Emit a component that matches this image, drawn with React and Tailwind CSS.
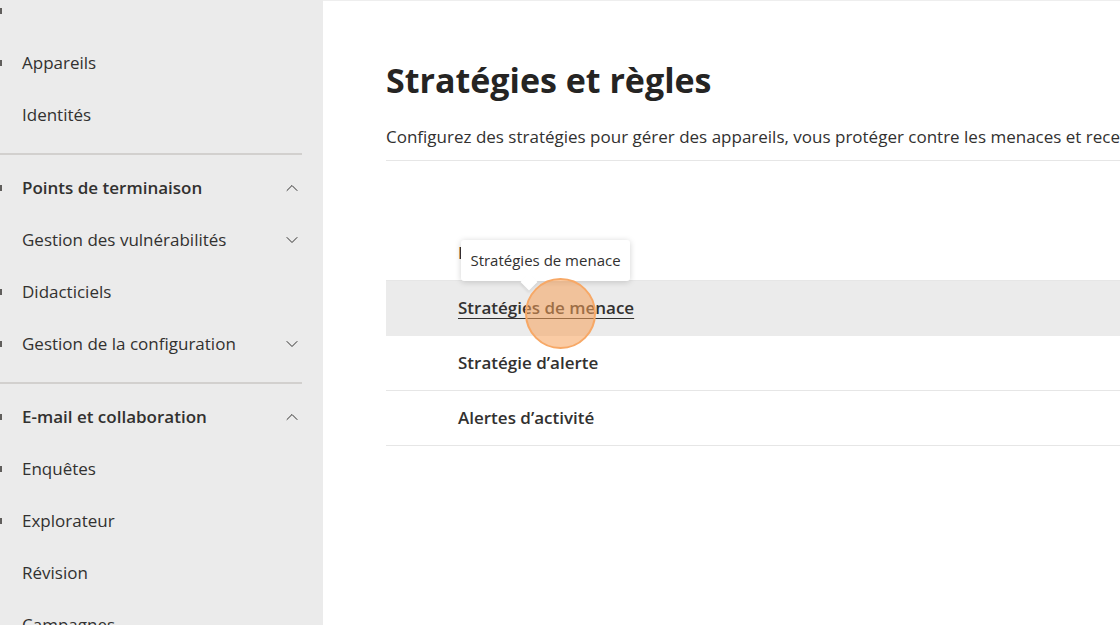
import React from 'react'
import { ChevronDown, ChevronUp } from 'lucide-react'

const font = { fontFamily: '"Open Sans", "Noto Sans", sans-serif' }

const NavItem = ({ label, bold, chevron, mark }) => (
  <div className='relative h-[52px] flex items-center justify-between pl-[22px] pr-[21px]'>
    {mark && <span className='absolute left-0 top-1/2 -translate-y-1/2 w-[2px] h-[6px] bg-[#605e5c]' />}
    <span className={`text-[17px] text-[#323130] ${bold ? 'font-semibold' : ''}`}>{label}</span>
    {chevron === 'up' && <ChevronUp size={20} strokeWidth={1.2} className='text-[#323130]' />}
    {chevron === 'down' && <ChevronDown size={20} strokeWidth={1.2} className='text-[#323130]' />}
  </div>
)

const Divider = () => (
  <div className='h-[21px] pt-[12px] pr-[21px]'>
    <div className='h-[2px] bg-[#d2d0ce]' />
  </div>
)

const Row = ({ label, active }) => (
  <div className={`h-[55px] flex items-center pl-[72px] border-b border-[#e6e6e6] ${active ? 'bg-[#ebebeb] border-transparent' : ''}`}>
    <span className={`text-[17px] font-semibold text-[#323130] ${active ? 'underline underline-offset-4' : ''}`}>{label}</span>
  </div>
)

export default function App() {
  return (
    <div className='relative flex w-[1120px] h-[625px] overflow-hidden bg-white' style={font}>
      {/* Sidebar */}
      <div className='w-[323px] shrink-0 h-full bg-[#ebebeb] overflow-hidden'>
        <div className='mt-[-15px]'>
          <NavItem label='' mark />
          <NavItem label='Appareils' mark />
          <NavItem label='Identités' />
          <Divider />
          <NavItem label='Points de terminaison' bold chevron='up' mark />
          <NavItem label='Gestion des vulnérabilités' chevron='down' />
          <NavItem label='Didacticiels' mark />
          <NavItem label='Gestion de la configuration' chevron='down' mark />
          <Divider />
          <NavItem label='E-mail et collaboration' bold chevron='up' mark />
          <NavItem label='Enquêtes' mark />
          <NavItem label='Explorateur' mark />
          <NavItem label='Révision' />
          <NavItem label='Campagnes' />
        </div>
      </div>

      {/* Main */}
      <div className='flex-1 pl-[63px] overflow-hidden border-t border-[#eeeeee]'>
        <h1 className='mt-[55px] text-[34px] leading-[48px] font-bold text-[#252423] whitespace-nowrap'>Stratégies et règles</h1>
        <p className='mt-[21px] text-[17px] leading-[24px] text-[#323130] whitespace-nowrap'>
          Configurez des stratégies pour gérer des appareils, vous protéger contre les menaces et recevoir des alertes sur diverses activités de votre organisation.
        </p>
        <div className='mt-[11px] h-px bg-[#e6e6e6]' />
        <div className='mt-[65px]'>
          <Row label='Menace' />
          <Row label='Stratégies de menace' active />
          <Row label='Stratégie d’alerte' />
          <Row label='Alertes d’activité' />
        </div>
      </div>

      {/* Tooltip */}
      <div className='absolute left-[461px] top-[240px] w-[169px] h-[41px] bg-white rounded-[3px] shadow-[0_1px_6px_rgba(0,0,0,0.18)] flex items-center justify-center'>
        <span className='text-[15px] text-[#323130]'>Stratégies de menace</span>
        <div className='absolute left-[62px] top-[36px] w-[12px] h-[12px] bg-white rotate-45 shadow-[2px_2px_3px_rgba(0,0,0,0.08)]' />
      </div>

      {/* Click marker */}
      <div className='absolute left-[525px] top-[278px] w-[71px] h-[71px] rounded-full bg-[rgba(245,160,90,0.55)] border-2 border-[#f7a866]' />
    </div>
  )
}
